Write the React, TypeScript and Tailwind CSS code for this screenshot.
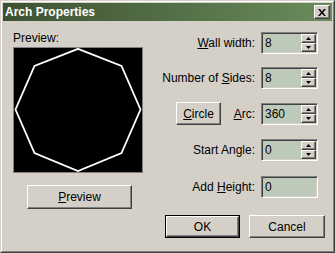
import React from "react";

const font = { fontFamily: '"Liberation Sans", Arial, sans-serif' };

function Spin() {
  return (
    <div className="absolute right-[1px] top-[1px] bottom-[1px] flex w-[15px] flex-col">
      {[0, 1].map((i) => (
        <div
          key={i}
          className="flex flex-1 items-center justify-center border border-t-white border-l-white border-b-[#404040] border-r-[#404040] bg-[#d4d0c8] shadow-[inset_-1px_-1px_#808080]"
        >
          <svg width="5" height="3" viewBox="0 0 5 3">
            {i === 0 ? <polygon points="2.5,0 5,3 0,3" fill="#000" /> : <polygon points="0,0 5,0 2.5,3" fill="#000" />}
          </svg>
        </div>
      ))}
    </div>
  );
}

function Field({ value, spin = true }: { value: string; spin?: boolean }) {
  return (
    <div className="relative h-[22px] w-[57px] border border-t-[#808080] border-l-[#808080] border-b-white border-r-white bg-[#bdc9b9] shadow-[inset_1px_1px_#404040,inset_-1px_-1px_#d4d0c8]">
      <span className="absolute left-[3px] top-[2px] text-[12px] leading-[16px] text-black">{value}</span>
      {spin && <Spin />}
    </div>
  );
}

function Btn({ children, className = "" }: { children: React.ReactNode; className?: string }) {
  return (
    <div
      className={`flex items-center justify-center border border-t-white border-l-white border-b-[#404040] border-r-[#404040] bg-[#d4d0c8] text-[12px] text-black shadow-[inset_-1px_-1px_#808080] ${className}`}
    >
      {children}
    </div>
  );
}

export default function App() {
  return (
    <div className="h-[253px] w-[335px] bg-[#d4d0c8]" style={font}>
      <div className="flex h-full w-full flex-col border border-t-[#d4d0c8] border-l-[#d4d0c8] border-b-[#404040] border-r-[#404040]">
        <div className="flex h-full w-full flex-col border border-t-white border-l-white border-b-[#808080] border-r-[#808080] px-[1px] pt-[1px]">
          {/* title bar */}
          <div className="flex h-[18px] items-center justify-between bg-gradient-to-r from-[#3d5233] to-[#6a8c5b] pl-[2px] pr-[2px]">
            <span className="text-[12px] font-bold leading-none text-white">Arch Properties</span>
            <div className="flex h-[14px] w-[16px] items-center justify-center border border-t-white border-l-white border-b-[#404040] border-r-[#404040] bg-[#d4d0c8] shadow-[inset_-1px_-1px_#808080]">
              <svg width="8" height="7" viewBox="0 0 8 7">
                <path d="M0 0h2l2 2.5L6 0h2L5 3.5 8 7H6L4 4.5 2 7H0l3-3.5z" fill="#000" />
              </svg>
            </div>
          </div>
          {/* body */}
          <div className="flex flex-1">
            <div className="flex w-[148px] flex-col pl-[10px] pt-[10px]">
              <span className="text-[12px] leading-[14px] text-black">Preview:</span>
              <div className="mt-[2px] h-[126px] w-[130px] border border-[#808080] bg-black">
                <svg width="128" height="124" viewBox="0 0 128 124">
                  <polygon
                    points="64,0.8 20.5,18 1.5,61.5 20.5,105 64,123 107.5,105 126.5,61.5 107.5,18"
                    fill="none"
                    stroke="#fff"
                    strokeWidth="1.8"
                  />
                </svg>
              </div>
              <Btn className="ml-[14px] mt-[12px] h-[24px] w-[105px]">
                <span>
                  <u>P</u>review
                </span>
              </Btn>
            </div>
            <div className="flex flex-1 flex-col pr-[14px] pt-[11px] text-[12px] text-black">
              <div className="flex items-center justify-end gap-[6px]">
                <span><u>W</u>all width:</span>
                <Field value="8" />
              </div>
              <div className="mt-[13px] flex items-center justify-end gap-[6px]">
                <span>Number of <u>S</u>ides:</span>
                <Field value="8" />
              </div>
              <div className="mt-[13px] flex items-center gap-[6px]">
                <Btn className="ml-[25px] h-[23px] w-[45px]">
                  <span>
                    <u>C</u>ircle
                  </span>
                </Btn>
                <span className="ml-auto"><u>A</u>rc:</span>
                <Field value="360" />
              </div>
              <div className="mt-[14px] flex items-center justify-end gap-[6px]">
                <span>Start Angle:</span>
                <Field value="0" />
              </div>
              <div className="mt-[15px] flex items-center justify-end gap-[6px]">
                <span>Add <u>H</u>eight:</span>
                <Field value="0" spin={false} />
              </div>
              <div className="-mr-[7px] mt-[17px] flex items-center justify-end gap-[9px]">
                <div className="border border-black">
                  <Btn className="h-[21px] w-[73px]">OK</Btn>
                </div>
                <Btn className="h-[23px] w-[76px]">Cancel</Btn>
              </div>
            </div>
          </div>
        </div>
      </div>
    </div>
  );
}
